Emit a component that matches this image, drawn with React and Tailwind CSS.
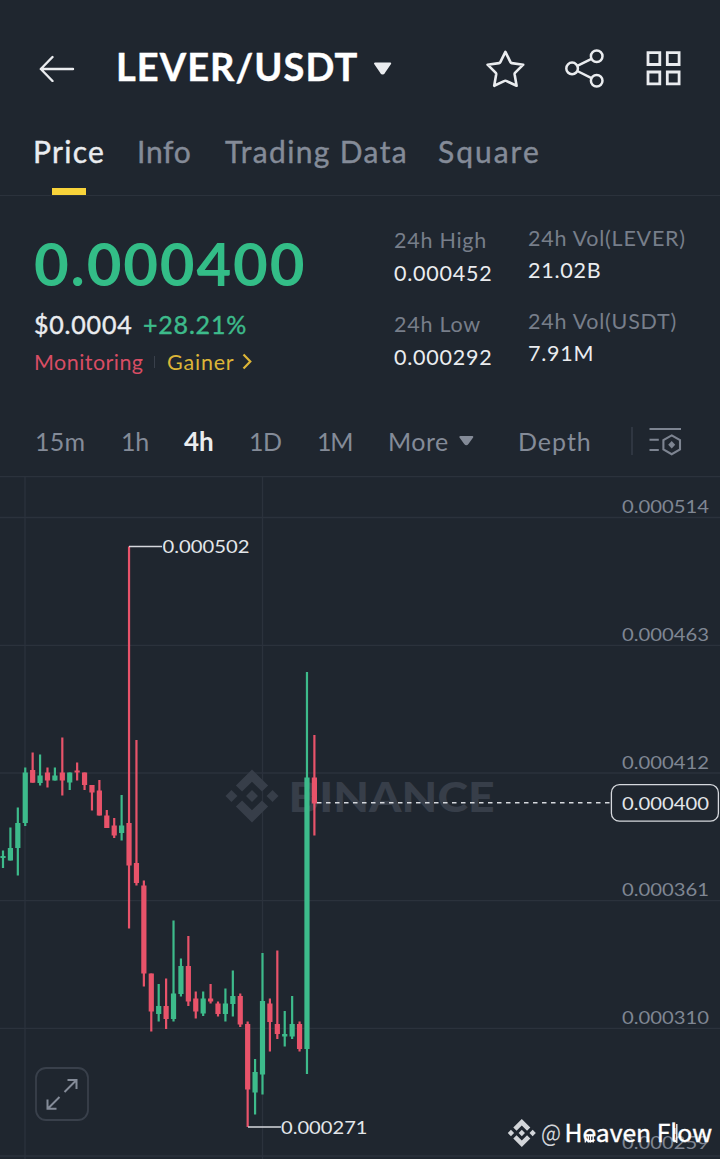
import React from 'react';

const UP = '#3dbb8b';
const DOWN = '#e8536a';

const tabs = [
  { label: 'Price', cls: 'w-[104px] text-[#eaecef] tracking-[1.3px]' },
  { label: 'Info', cls: 'w-[88px] text-[#848b98] tracking-[0.7px]' },
  { label: 'Trading Data', cls: 'w-[213px] text-[#848b98] tracking-[1.35px]' },
  { label: 'Square', cls: 'w-[120px] text-[#848b98] tracking-[2px]' },
];

// [wick top, body top, body bottom, wick bottom, rising]
const candles = [
  [850.5, 856, 858, 868, 1], [827.5, 848, 860.5, 860.5, 1], [807.5, 823, 848, 875.5, 1],
  [767.5, 772.5, 823, 826, 1], [752.5, 770, 782.7, 782.7, 0], [754.5, 775.5, 783, 785.5, 1],
  [767.5, 772.5, 780.5, 787.5, 0], [767.5, 775.5, 780.5, 780.5, 1], [737.5, 772.5, 780.5, 795.5, 0],
  [772.5, 772.5, 782.5, 790, 1], [762.5, 770.5, 772.5, 780.5, 0], [772.5, 772.5, 785, 790, 0],
  [785, 785, 792.5, 810.5, 0], [780, 790.5, 815.5, 815.5, 0], [810, 815.5, 828, 828, 0],
  [818, 825.5, 835.5, 838, 0], [795, 825.5, 833, 840.5, 1], [546.5, 823, 865.5, 928.5, 0],
  [740, 863, 883, 885.5, 0], [880.5, 885.5, 973.5, 986.5, 0], [973.5, 973.5, 1011.5, 1031.5, 0],
  [984, 1006, 1014, 1021.5, 1], [978.5, 1006, 1019, 1029, 0], [920.5, 993.5, 1019, 1021.5, 1],
  [958.5, 966, 994, 996.5, 1], [936, 966, 1001.5, 1006, 0], [991.5, 998.5, 1011.5, 1018.5, 0],
  [991.5, 998.5, 1013.5, 1016, 1], [984, 998.5, 1001.5, 1003.5, 0], [1001.5, 1003.5, 1014, 1016.5, 0],
  [988.5, 1003.5, 1014, 1021.5, 1], [970.5, 996, 1004, 1016.5, 1], [993.5, 996, 1024.5, 1027, 0],
  [1021.5, 1024, 1089.5, 1127, 0], [1059, 1072, 1092.5, 1114.5, 1], [953, 1001, 1074.5, 1094.5, 1],
  [998.5, 1003.5, 1022, 1051.5, 0], [950.5, 1024, 1034, 1039, 0], [1011, 1034, 1036.5, 1046.5, 1],
  [996, 1024, 1036.5, 1039, 1], [1021.5, 1024, 1049, 1051.5, 0], [672, 777.5, 1049, 1074, 1],
  [735, 777.5, 803.5, 835.5, 0],
];

const gridRows = [
  { y: 517.5, label: '0.000514' },
  { y: 645.3, label: '0.000463' },
  { y: 773, label: '0.000412' },
  { y: 900.7, label: '0.000361' },
  { y: 1028.3, label: '0.000310' },
  { y: 1156, label: '0.000259', labelY: 1149 },
];

const BinanceMark = ({ x, y, r, fill }) => (
  <g transform={`translate(${x} ${y}) scale(${r / 12})`} fill={fill}>
    <path d="M-7.3-4.7L0-12L7.3-4.7L4.5-2L0-6.5L-4.5-2Z" />
    <path d="M-7.3 4.7L0 12L7.3 4.7L4.5 2L0 6.5L-4.5 2Z" />
    <path d="M-12 0L-9.3-2.7L-6.6 0L-9.3 2.7Z" />
    <path d="M12 0L9.3-2.7L6.6 0L9.3 2.7Z" />
    <path d="M-2.7 0L0-2.7L2.7 0L0 2.7Z" />
  </g>
);

const Header = () => (
  <header className="flex h-[116px] items-center pt-5 pl-[38px]">
    <svg width="38" height="28" viewBox="0 0 38 28" fill="none" stroke="#eaecef" strokeWidth="2.4" strokeLinecap="round" strokeLinejoin="round">
      <path d="M14.5 3L2.8 15L14.5 27M3 15H35" />
    </svg>
    <h1 className="ml-[40px] w-[252px] pb-[4px] text-[38px] leading-[44px] font-bold tracking-[1.05px] text-white [-webkit-text-stroke:0.4px]">LEVER/USDT</h1>
    <svg className="ml-[4px]" width="22" height="16" viewBox="0 0 22 16" fill="#eaecef" stroke="#eaecef" strokeWidth="2" strokeLinejoin="round">
      <path d="M3 3.5H18.2L12.2 12.3Q10.6 14.5 9 12.3Z" />
    </svg>
    <div className="ml-[91px] flex items-center gap-[39px]">
      <svg width="40" height="40" viewBox="485 48 40 40" fill="none" stroke="#eaecef" strokeWidth="2.6" strokeLinejoin="round">
        <path d="M505.4 51.8L510.6 62.3Q511 63 511.8 63.1L523.2 64.7L515 72.9Q514.5 73.5 514.6 74.2L516.6 85.8L506.2 80.9Q505.4 80.5 504.6 80.9L494.2 85.8L496.2 74.2Q496.3 73.5 495.8 72.9L487.6 64.7L499 63.1Q499.8 63 500.2 62.3Z" />
      </svg>
      <svg width="42" height="40" viewBox="564 48 42 40" fill="none" stroke="#eaecef" strokeWidth="2.5">
        <circle cx="572.1" cy="68.4" r="5.8" />
        <circle cx="596.7" cy="56.3" r="5.8" />
        <circle cx="596.7" cy="80.8" r="5.8" />
        <path d="M577.3 65.8L591.5 58.8M577.3 71L591.5 78.2" />
      </svg>
      <svg width="40" height="40" viewBox="645 48 40 40" fill="none" stroke="#eaecef" strokeWidth="2.8">
        <path d="M648 52.7h11.8v11.8h-11.8zM667.3 52.7h11.8v11.8h-11.8zM648 72h11.8v11.8h-11.8zM667.3 72h11.8v11.8h-11.8z" />
      </svg>
    </div>
  </header>
);

const Tabs = () => (
  <nav className="flex h-[80px] border-b border-[#2b323c] pt-[17px] pl-[33px] text-[30px] leading-[36px] [-webkit-text-stroke:0.4px]">
    {tabs.map((tab, i) => (
      <div key={tab.label} className={tab.cls}>
        <span>{tab.label}</span>
        {i === 0 && <div className="mt-[19px] ml-[19px] h-[7px] w-[34px] bg-[#f8d33a]" />}
      </div>
    ))}
  </nav>
);

const Summary = () => (
  <section className="flex h-[210px] pl-[34px]">
    <div className="w-[360px] pt-[31px]">
      <div className="text-[60px] leading-[72px] font-bold tracking-[1.8px] text-[#33bd87]">0.000400</div>
      <div className="mt-[10px] flex text-[25px] leading-[30px] tracking-[0.8px] [-webkit-text-stroke:0.4px]">
        <span className="w-[109px] text-[#eaecef]">$0.0004</span>
        <span className="text-[#3dbb8b]">+28.21%</span>
      </div>
      <div className="mt-[9px] flex items-center text-[21.5px] leading-[28px]">
        <span className="w-[120px] tracking-[0.45px] text-[#d84d64]">Monitoring</span>
        <div className="h-3 w-px bg-[#39404b]" />
        <span className="ml-[12px] w-[75px] tracking-[0.8px] text-[#dcb537]">Gainer</span>
        <svg width="10" height="18" viewBox="0 0 10 18" fill="none" stroke="#dcb537" strokeWidth="2.2">
          <path d="M1.5 1.5L8.3 8.5L1.5 15.5" />
        </svg>
      </div>
    </div>
    <dl className="w-[134px] pt-[28px] text-[21.5px] leading-[33px] tracking-[0.75px]">
      <dt className="text-[#777e8a]">24h High</dt>
      <dd className="text-[#eaecef]">0.000452</dd>
      <dt className="mt-[18px] text-[#777e8a]">24h Low</dt>
      <dd className="text-[#eaecef]">0.000292</dd>
    </dl>
    <dl className="pt-[26px] text-[21.5px] leading-[32px] tracking-[0.75px]">
      <dt className="text-[#777e8a]">24h Vol(LEVER)</dt>
      <dd className="text-[#eaecef]">21.02B</dd>
      <dt className="mt-[19px] text-[#777e8a]">24h Vol(USDT)</dt>
      <dd className="text-[#eaecef]">7.91M</dd>
    </dl>
  </section>
);

const Intervals = () => (
  <div className="flex h-[70px] items-center pl-[35px] text-[25px] leading-[30px] text-[#848b98]">
    <span className="w-[86px] tracking-[0.2px]">15m</span>
    <span className="w-[63px] tracking-[-0.3px]">1h</span>
    <span className="w-[65px] pb-px text-[26px] font-bold text-[#eaecef]">4h</span>
    <span className="w-[68px] tracking-[-0.5px]">1D</span>
    <span className="w-[71px] tracking-[-1.2px]">1M</span>
    <span className="w-[70px] tracking-[0.5px]">More</span>
    <svg width="18" height="12" viewBox="0 0 18 12" fill="#848b98" stroke="#848b98" strokeWidth="2" strokeLinejoin="round">
      <path d="M2.3 2H14.3L9.6 8.5Q8.3 10.2 7 8.5Z" />
    </svg>
    <span className="ml-[42px] w-[113px] tracking-[1px]">Depth</span>
    <div className="h-[28px] w-[2px] bg-[#2f3641]" />
    <svg className="ml-[15px]" width="36" height="32" viewBox="648 425 36 32" fill="none" stroke="#7d8491" strokeWidth="2.1">
      <path d="M649.5 429H681M649.5 439.7H658.8M649.5 450H658.8" />
      <path d="M671.7 435.4L680 440.1V449.5L671.7 454.2L663.4 449.5V440.1Z" />
      <path d="M671.7 441L675.2 444.8L671.7 448.6L668.2 444.8Z" fill="#7d8491" stroke="none" />
    </svg>
  </div>
);

const Chart = () => (
  <svg className="block" width="720" height="683" viewBox="0 476 720 683">
    <g stroke="#2b323c" strokeWidth="1.3">
      <path d="M0 476.6H720M25 476V1159M262.5 476V1159" />
      {gridRows.map((row) => (
        <path key={row.label} d={`M0 ${row.y}H720`} />
      ))}
    </g>

    <BinanceMark x={252} y={796} r={26.5} fill="#373e49" />
    <text x="288.5" y="811.7" fontSize="42.5" fontWeight="900" fill="#373e49" textLength="206" lengthAdjust="spacingAndGlyphs">BINANCE</text>

    {candles.map(([high, top, bottom, low, up], i) => {
      const x = 3 + i * 7.414;
      const color = up ? UP : DOWN;
      return (
        <g key={i} fill={color}>
          <rect x={x - 1.1} y={high} width="2.2" height={low - high} />
          <rect x={x - 2.6} y={top} width="5.2" height={bottom - top} />
        </g>
      );
    })}

    <path d="M317 802.8H611" stroke="#d5d8dd" strokeWidth="1.5" strokeDasharray="4.5 4.5" />
    <path d="M129 546.5H162M248 1127H281" stroke="#d5d8dd" strokeWidth="1.4" />

    <g fontSize="18" fill="#7f8693">
      {gridRows.map((row) => (
        <text key={row.label} x="622" y={row.labelY ?? row.y - 4.4} textLength="87" lengthAdjust="spacingAndGlyphs">{row.label}</text>
      ))}
    </g>
    <g fontSize="18" fill="#e3e6ea">
      <text x="162.5" y="553" textLength="87" lengthAdjust="spacingAndGlyphs">0.000502</text>
      <text x="281" y="1134" textLength="86.5" lengthAdjust="spacingAndGlyphs">0.000271</text>
      <rect x="611.4" y="784.7" width="107" height="36.5" rx="8" fill="#1f262f" stroke="#d5d8dd" strokeWidth="1.3" />
      <text x="622" y="810" textLength="87" lengthAdjust="spacingAndGlyphs">0.000400</text>
    </g>

    {/* full screen button */}
    <rect x="36" y="1068" width="52" height="52" rx="10" fill="none" stroke="#39404b" strokeWidth="1.8" />
    <path d="M64.5 1092L76 1080.5M67.5 1080H76.5V1089M59.5 1097L48 1108.5M47.5 1099.5V1108.8H56.5" fill="none" stroke="#848b98" strokeWidth="2" />

    {/* author stamp */}
    <BinanceMark x={521.8} y={1133} r={14} fill="#d2d5d9" />
    <g fontFamily="'Noto Sans CJK SC', 'Noto Sans', sans-serif" fontSize="24">
      <text x="541" y="1142" fill="#d2d5d9" textLength="20" lengthAdjust="spacingAndGlyphs">@</text>
      <text x="564.5" y="1142" fill="#fff" textLength="147.5" lengthAdjust="spacingAndGlyphs" stroke="#fff" strokeWidth="0.4">Heaven Flow</text>
    </g>
    <path d="M585.3 1142.5V1135.5H588.3V1142.5M590.5 1142.5V1135.5H593.2V1142.5M676.8 1124V1143M674.8 1128V1134" fill="none" stroke="#fff" strokeWidth="1.3" />
  </svg>
);

const App = () => (
  <main className="h-[1159px] w-[720px] overflow-hidden bg-[#1f262f] font-['Lato',sans-serif]">
    <Header />
    <Tabs />
    <Summary />
    <Intervals />
    <Chart />
  </main>
);

export default App;
